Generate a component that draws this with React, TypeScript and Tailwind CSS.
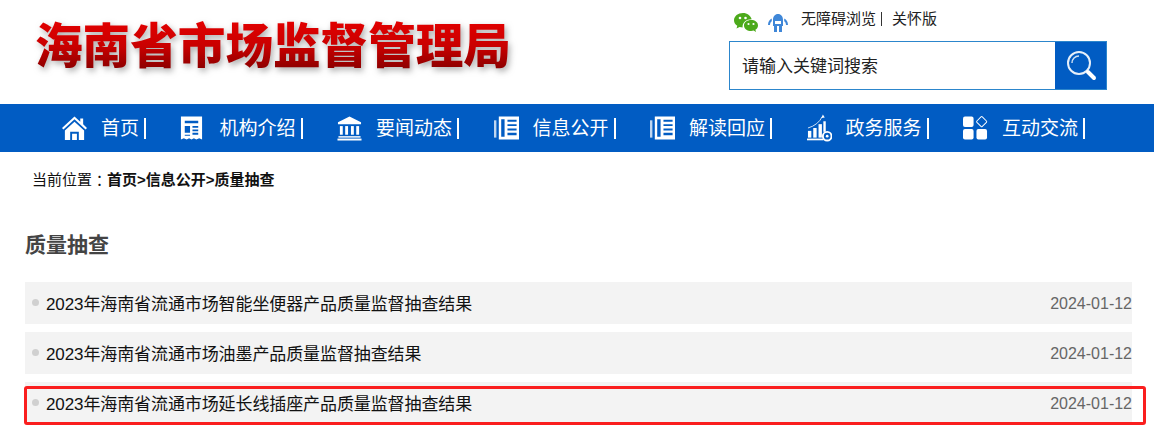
import React from "react";

const font = { fontFamily: '"Liberation Sans", "Noto Sans CJK SC", sans-serif' };

const Home = () => (
  <svg width="26" height="26" viewBox="0 0 26 26" fill="#fff">
    <path d="M13 1 L19 6.5 V3 H22 V9.2 L26 13 L24.5 14.5 L13 4 L1.5 14.5 L0 13 Z" />
    <path fillRule="evenodd" d="M13 6.5 L23 15.5 V25.5 H17.5 V17 H8.5 V25.5 H3 V15.5 Z M10.5 19 H15.5 V25.5 H10.5 Z" />
  </svg>
);
const Doc = () => (
  <svg width="26" height="26" viewBox="0 0 26 26" fill="#fff" className="-translate-x-[2px]">
    <path fillRule="evenodd" d="M2 1 H24 V25 L21 23.6 L18 25 L15.5 23.6 L13 25 L10.5 23.6 L8 25 L5 23.6 L2 25 Z M6 5.5 V8 H20 V5.5 Z M6 11 V18 H11.5 V11 Z M14 11 V12.8 H20 V11 Z M14 14.5 V16.3 H20 V14.5 Z M14 18 V20 H20 V18 Z M6 20 V21 H11.5 V20 Z" />
  </svg>
);
const Bank = () => (
  <svg width="26" height="26" viewBox="0 0 26 26" fill="#fff">
    <path d="M13 1 L25 7 V9 H1 V7 Z" />
    <rect x="3" y="11" width="3" height="9" />
    <rect x="8.5" y="11" width="3" height="9" />
    <rect x="14.5" y="11" width="3" height="9" />
    <rect x="20" y="11" width="3" height="9" />
    <rect x="1.5" y="21.5" width="23" height="1.5" />
    <rect x="0.5" y="24" width="25" height="2" />
  </svg>
);
const Table = () => (
  <svg width="26" height="26" viewBox="0 0 26 26" fill="#fff">
    <path opacity="0.75" d="M0 5 H2.5 V23 H0 Z" />
    <path fillRule="evenodd" d="M5 1 H26 V25 H5 Z M7.5 4 V22 H11 V4 Z M14 4.5 V6.5 H23.5 V4.5 Z M14 9 V11 H23.5 V9 Z M14 13.5 V15.5 H23.5 V13.5 Z M14 18 V20.5 H23.5 V18 Z" />
  </svg>
);
const Chart = () => (
  <svg width="26" height="28" viewBox="0 0 26 28" fill="#fff">
    <rect x="1" y="17" width="3.5" height="7" />
    <rect x="6.5" y="14" width="3.5" height="10" />
    <rect x="12" y="10" width="3.5" height="14" />
    <rect x="0" y="25" width="17" height="1.8" />
    <path d="M1 14 C8 12 13 8 16 2" fill="none" stroke="#fff" strokeWidth="1" opacity="0.85" />
    <path d="M15 3.5 L16.5 0 L18.5 3 Z" />
    <rect x="17" y="7" width="2.5" height="11" />
    <circle cx="21" cy="22.5" r="4.5" fill="none" stroke="#fff" strokeWidth="2" />
    <circle cx="21" cy="22.5" r="1.4" />
  </svg>
);
const Grid = () => (
  <svg width="26" height="26" viewBox="0 0 26 26" fill="#fff">
    <rect x="0" y="1" width="11" height="11" rx="2" />
    <rect x="0" y="14" width="11" height="11" rx="2" />
    <rect x="14" y="14" width="11" height="11" rx="2" />
    <rect x="15.4" y="2.4" width="8" height="8" rx="1" transform="rotate(45 19.4 6.4)" fill="none" stroke="#fff" strokeWidth="1" />
  </svg>
);

const navItems: [string, React.ReactNode][] = [
  ["首页", <Home />],
  ["机构介绍", <Doc />],
  ["要闻动态", <Bank />],
  ["信息公开", <Table />],
  ["解读回应", <Table />],
  ["政务服务", <Chart />],
  ["互动交流", <Grid />],
];

const rows = [
  "2023年海南省流通市场智能坐便器产品质量监督抽查结果",
  "2023年海南省流通市场油墨产品质量监督抽查结果",
  "2023年海南省流通市场延长线插座产品质量监督抽查结果",
];

export default function App() {
  return (
    <div className="relative h-[431px] w-[1154px] overflow-hidden bg-white" style={font}>
      <header className="flex h-[104px] justify-between pl-[35px] pr-[47px]">
        <div className="mt-[19px] h-[56px] bg-gradient-to-b from-[#e40000] via-[#c80000] to-[#7c0000] bg-clip-text text-[47.6px] font-black leading-[56px] text-transparent drop-shadow-[2px_3px_3px_rgba(90,90,90,0.5)]">
          海南省市场监督管理局
        </div>
        <div className="flex w-[378px] flex-col">
          <div className="flex h-[41px] items-start pt-[10px]">
            <svg width="24" height="20" viewBox="0 0 24 20" className="ml-[5px] mt-[3px]">
              <path fill="#4caa1b" d="M9 0 C4 0 0 3.2 0 7.2 C0 9.5 1.3 11.4 3.3 12.8 L2.5 15.5 L5.6 14 C6.6 14.3 7.6 14.4 8.6 14.4 C8.3 9.5 12 6.2 17.7 6.2 C16.6 2.6 13.2 0 9 0 Z" />
              <path fill="#4caa1b" d="M24 12.4 C24 9 20.8 7 17.2 7 C13.2 7 10 9.2 10 12.4 C10 15.8 13.2 18 17.2 18 C18 18 18.8 17.9 19.6 17.6 L22 19 L21.4 16.7 C23 15.6 24 14.2 24 12.4 Z" />
              <circle cx="6" cy="5" r="1.3" fill="#fff" />
              <circle cx="11.5" cy="5" r="1.3" fill="#fff" />
              <circle cx="14.5" cy="11" r="1.1" fill="#fff" />
              <circle cx="19.5" cy="11" r="1.1" fill="#fff" />
            </svg>
            <svg width="20" height="18" viewBox="0 0 20 18" className="ml-[10px] mt-[4px]" fill="#3f87d8">
              <path fillRule="evenodd" d="M5 6 C5 2.5 7 0 10 0 C13 0 15 2.5 15 6 V12 H5 Z M7 7 V10 H13 V7 Z" />
              <rect x="6" y="12" width="3" height="6" />
              <rect x="11" y="12" width="3" height="6" />
              <path d="M3.8 4.5 C1.5 5.5 0 8 0 11 H2 C2 9 3 7.8 3.8 7.2 Z M16.2 4.5 C18.5 5.5 20 8 20 11 H18 C18 9 17 7.8 16.2 7.2 Z" />
            </svg>
            <span className="ml-[13px] text-[15px] leading-[18px] text-[#222]">无障碍浏览</span>
            <span className="ml-[5px] h-[14px] w-px translate-y-[2px] bg-[#333]" />
            <span className="ml-[10px] text-[15px] leading-[18px] text-[#222]">关怀版</span>
          </div>
          <div className="flex h-[49px] border border-[#2c86cc] bg-white">
            <div className="flex flex-1 translate-y-[1px] items-center pl-[12px] text-[17px] text-[#222]">请输入关键词搜索</div>
            <div className="flex w-[51px] items-center justify-center bg-[#015cc3]">
              <svg width="32" height="32" viewBox="0 0 32 32" fill="none" stroke="#fff">
                <circle cx="14" cy="13" r="11" strokeWidth="2" opacity="0.9" />
                <path d="M7 13 C7 9 10 6 14 6" strokeWidth="1.5" opacity="0.8" />
                <path d="M23 22 L29 28" strokeWidth="4" strokeLinecap="round" />
              </svg>
            </div>
          </div>
        </div>
      </header>

      <nav className="flex h-[48px] items-center bg-[#015cc3] pl-[62px] text-white">
        {navItems.map(([label, icon]) => (
          <div key={label} className="mr-[34.5px] flex items-center">
            <div className="flex w-[25px] items-center justify-center">{icon}</div>
            <span className="ml-[14px] translate-y-[1px] text-[19px] leading-[22px]">{label}</span>
            <span className="ml-[5px] h-[21px] w-[2px] bg-white" />
          </div>
        ))}
      </nav>

      <div className="flex h-[55px] translate-y-[1px] items-center pl-[32px] text-[15px] text-[#111]">
        当前位置<span style={{ fontFamily: '"Noto Sans CJK TC", sans-serif' }}>：</span>
        <b className="font-semibold">首页&gt;信息公开&gt;质量抽查</b>
      </div>

      <h1 className="mt-[20px] h-[36px] pl-[25px] text-[21px] font-bold leading-[36px] text-[#444]">质量抽查</h1>

      <ul className="mt-[19px] flex flex-col gap-[8px] pl-[25px] pr-[22px]">
        {rows.map((r) => (
          <li key={r} className="flex h-[42px] items-center justify-between bg-[#f3f3f3]">
            <div className="flex items-center">
              <span className="ml-[7px] h-[7px] w-[7px] -translate-y-[1px] rounded-full bg-[#d0d0d0]" />
              <span className="ml-[7px] translate-y-[2px] text-[17px] tracking-[-0.1px] text-[#111]">{r}</span>
            </div>
            <span className="translate-y-[1px] text-[16px] text-[#666]">2024-01-12</span>
          </li>
        ))}
      </ul>

      <div className="absolute left-[24px] top-[386px] h-[39px] w-[1122px] rounded-[3px] border-[3px] border-[#fa1e1e]" />
    </div>
  );
}
